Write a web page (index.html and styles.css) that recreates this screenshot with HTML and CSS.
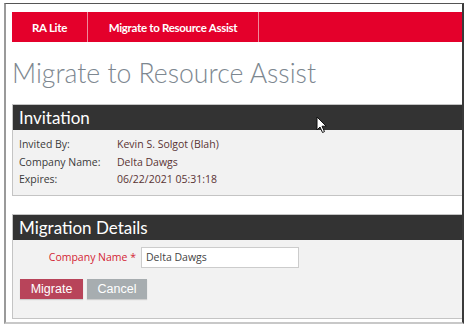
FILE: index.html
```html
<!DOCTYPE html>
<html lang="en">
<head>
    <meta charset="UTF-8">
    <title>Migrate to Resource Assist</title>
    <link rel="stylesheet" href="styles.css">
</head>
<body>
    <div class="frame">
        <div class="page">
            <nav class="topnav">
                <a class="nav-item nav-first">RA Lite</a>
                <a class="nav-item nav-second">Migrate to Resource Assist</a>
                <span class="nav-rest"></span>
            </nav>

            <h1 class="page-title">Migrate to Resource Assist</h1>

            <section class="panel panel-invite">
                <div class="panel-head">Invitation</div>
                <div class="panel-body">
                    <div class="info-row"><span class="info-label">Invited By:</span><span class="info-value">Kevin S. Solgot (Blah)</span></div>
                    <div class="info-row"><span class="info-label">Company Name:</span><span class="info-value">Delta Dawgs</span></div>
                    <div class="info-row"><span class="info-label">Expires:</span><span class="info-value">06/22/2021 05:31:18</span></div>
                </div>
            </section>

            <section class="panel panel-details">
                <div class="panel-head">Migration Details</div>
                <div class="panel-body">
                    <div class="form-row">
                        <label class="form-label" for="company">Company Name *</label>
                        <input class="form-input" id="company" type="text" value="Delta Dawgs">
                    </div>
                    <div class="actions">
                        <button class="btn btn-migrate">Migrate</button>
                        <button class="btn btn-cancel">Cancel</button>
                    </div>
                </div>
            </section>
        </div>
    </div>
    <svg class="cursor" width="12" height="18" viewBox="0 0 12 18">
        <path d="M1 1 L1 14 L4 11 L6.5 16.5 L8.5 15.6 L6 10.2 L10.2 10.2 Z" fill="#fff" stroke="#111" stroke-width="1"/>
    </svg>
</body>
</html>
```

FILE: styles.css
```css
* {
    box-sizing: border-box;
    margin: 0;
    padding: 0;
}

body {
    background: #fff;
    font-family: "Open Sans", "Liberation Sans", sans-serif;
    color: #333;
    position: relative;
    width: 466px;
    height: 326px;
    overflow: hidden;
}

.frame {
    margin: 3px 0 0 4px;
    width: 460px;
    height: 321px;
    border-top: 1px solid #555;
    border-left: 2px solid #9a9a9a;
    border-right: 2px solid #3a3a3a;
    border-bottom: 2px solid #c8c8c8;
    overflow: hidden;
}

.page {
    width: 520px;
    padding: 8px 0 0 6px;
}

.topnav {
    display: flex;
    height: 30px;
    background: #e4002b;
}

.nav-item {
    display: flex;
    align-items: center;
    justify-content: center;
    color: #fff;
    font-family: "Lato", sans-serif;
    font-weight: bold;
    font-size: 11.5px;
    letter-spacing: -0.3px;
    border-right: 1px solid #f08a9c;
}

.nav-first {
    width: 76px;
}

.nav-second {
    width: 171px;
}

.page-title {
    font-family: "Lato", sans-serif;
    font-weight: 300;
    font-size: 26.6px;
    color: #7d8790;
    margin: 15px 0 0 0;
    height: 47px;
    line-height: 32px;
}

.panel {
    border: 1px solid #c4c4c4;
    background: #f2f2f2;
}

.panel-head {
    background: #333;
    color: #fff;
    font-family: "Lato", sans-serif;
    font-size: 17px;
    height: 25px;
    line-height: 25px;
    padding-left: 6px;
}

.panel-invite .panel-body {
    height: 65px;
    padding: 6px 0 0 6px;
}

.info-row {
    display: flex;
    font-size: 10.5px;
    line-height: 17.5px;
}

.info-label {
    width: 98px;
    color: #3a3a3a;
}

.info-value {
    color: #5a3434;
}

.panel-details {
    margin-top: 18px;
}

.panel-details .panel-body {
    height: 78px;
    padding: 6px 0 0 7px;
}

.form-row {
    display: flex;
    align-items: center;
    height: 22px;
}

.form-label {
    width: 121px;
    text-align: right;
    padding-right: 5px;
    color: #d41f35;
    font-size: 10.5px;
}

.form-input {
    width: 158px;
    height: 21px;
    border: 1px solid #ccc;
    background: #fff;
    padding-left: 4px;
    font-family: "Open Sans", sans-serif;
    font-size: 10.5px;
    color: #444;
}

.actions {
    display: flex;
    gap: 4px;
    margin-top: 11px;
}

.btn {
    height: 20px;
    border: none;
    color: #fff;
    font-family: "Liberation Sans", Arial, sans-serif;
    font-size: 12.5px;
    box-shadow: 0 1px 1px rgba(0, 0, 0, 0.15);
}

.btn-migrate {
    width: 63px;
    background: #b8445a;
}

.btn-cancel {
    width: 60px;
    background: #a7adb0;
}

.cursor {
    position: absolute;
    left: 316px;
    top: 116px;
}
```
